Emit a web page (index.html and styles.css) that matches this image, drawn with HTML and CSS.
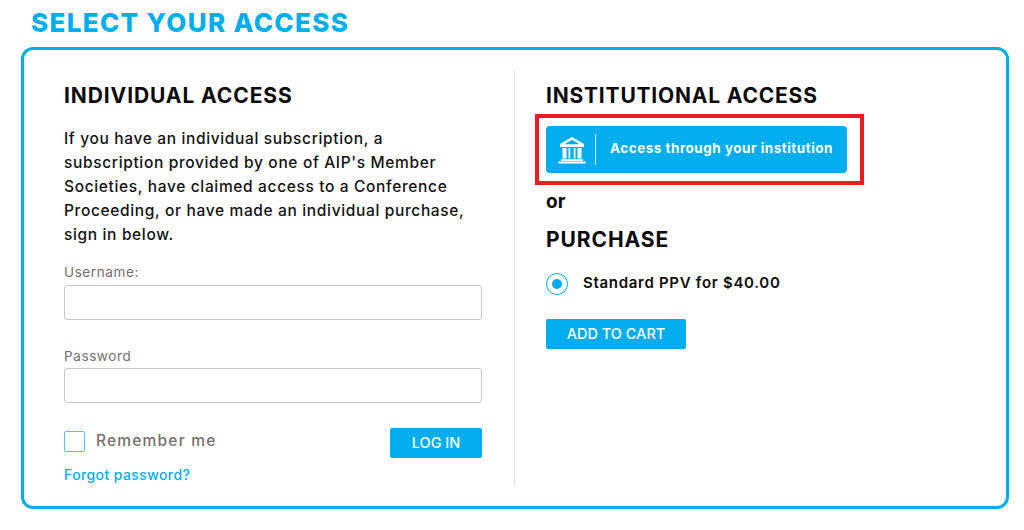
FILE: index.html
```html
<!DOCTYPE html>
<html lang="en">
<head>
<meta charset="utf-8">
<title>Select your access</title>
<link rel="stylesheet" href="styles.css">
</head>
<body>
<h1 class="title">SELECT YOUR ACCESS</h1>
<main class="card">
  <section class="col col-left">
    <h2 class="heading">INDIVIDUAL ACCESS</h2>
    <p class="intro">If you have an individual subscription, a<br>subscription provided by one of AIP's Member<br>Societies, have claimed access to a Conference<br>Proceeding, or have made an individual purchase,<br>sign in below.</p>
    <form class="login">
      <label class="field-label label-user">Username:</label>
      <input class="input" type="text">
      <label class="field-label label-pass">Password</label>
      <input class="input" type="password">
      <div class="login-row">
        <span class="remember"><span class="checkbox"></span>Remember me</span>
        <span class="btn btn-login">LOG IN</span>
      </div>
      <a class="forgot">Forgot password?</a>
    </form>
  </section>
  <section class="col col-right">
    <h2 class="heading">INSTITUTIONAL ACCESS</h2>
    <div class="highlight">
      <a class="inst-btn">
        <svg class="inst-icon" viewBox="0 0 28 28" width="28" height="28" aria-hidden="true">
          <path fill="#fff" d="M14 1 2 8V11H26V8zM14 3.800 21.500 8.300H6.500z" fill-rule="evenodd"/>
          <path fill="#fff" d="M4.500 12h4v10.500h-4zM10.500 12h1.800v10.500h-1.800zM15.700 12h1.800v10.500h-1.800zM19.500 12h4v10.500h-4zM3 23.300h22v1.700H3zM.5 25.500h27V27.500H.5z"/>
        </svg>
        <span class="inst-sep"></span>
        <span class="inst-text">Access through your institution</span>
      </a>
    </div>
    <p class="or">or</p>
    <h2 class="heading heading-purchase">PURCHASE</h2>
    <div class="option"><span class="radio"><span class="radio-dot"></span></span><span class="option-text">Standard PPV for $40.00</span></div>
    <span class="btn btn-cart">ADD TO CART</span>
  </section>
</main>
</body>
</html>
```

FILE: styles.css
```css
* { box-sizing: border-box; }
html, body { margin: 0; padding: 0; background: #fff; }
body {
  width: 1024px;
  height: 530px;
  overflow: hidden;
  font-family: "Inter", "Liberation Sans", sans-serif;
  color: #0c0c0c;
  padding: 7px 15px 0 21px;
}
.title {
  margin: 0 0 9px 10px;
  font-size: 26px;
  line-height: 31px;
  font-weight: 800;
  letter-spacing: 1.34px;
  color: #00aeef;
}
.card {
  height: 462px;
  border: 3px solid #00aeef;
  border-radius: 12px;
  display: grid;
  grid-template-columns: 491px 1fr;
  padding: 20px 0 20px;
}
.col { height: 416px; }
.col-left { padding: 13px 32px 0 40px; border-right: 1px solid #e4e4e4; }
.col-right { padding: 13px 0 0 31px; }
.heading {
  margin: 0;
  font-size: 21px;
  line-height: 26px;
  font-weight: 700;
  letter-spacing: 0.9px;
  color: #0a0a0a;
}
.col-right .heading { letter-spacing: 0.8px; }
.intro {
  margin: 18px 0 0;
  font-size: 15.500px;
  line-height: 24px;
  font-weight: 500;
  letter-spacing: 0.65px;
  color: #111;
  white-space: nowrap;
}
.login { display: flex; flex-direction: column; }
.field-label {
  font-size: 13.500px;
  line-height: 18px;
  letter-spacing: 0.6px;
  color: #77706f;
}
.label-user { margin-top: 16px; margin-bottom: 4px; }
.label-pass { margin-top: 27px; margin-bottom: 3px; }
.input {
  width: 100%;
  height: 35px;
  border: 1px solid #c8c8c8;
  border-radius: 3px;
  background: #fff;
  padding: 0;
}
.login-row {
  display: flex;
  justify-content: space-between;
  align-items: flex-start;
  margin-top: 25px;
}
.remember {
  display: flex;
  align-items: center;
  gap: 11px;
  margin-top: 1px;
  font-size: 15.500px;
  line-height: 20px;
  font-weight: 500;
  letter-spacing: 1.2px;
  color: #77706f;
}
.checkbox {
  display: block;
  width: 21px;
  height: 21px;
  border: 1.500px solid #4cc6f3;
  border-radius: 2px;
  margin-top: 2px;
}
.btn {
  display: flex;
  align-items: center;
  justify-content: center;
  height: 30px;
  padding-bottom: 2px;
  background: #00aeef;
  color: #fff;
  border-radius: 2px;
  font-size: 14.500px;
  font-weight: 500;
}
.btn-login { width: 92px; }
.btn-cart { width: 140px; margin-top: 24px; }
.forgot {
  margin-top: 7px;
  font-size: 14px;
  line-height: 20px;
  font-weight: 500;
  letter-spacing: 0.4px;
  color: #00aeef;
}
.highlight {
  width: 329px;
  height: 71px;
  margin: 5px 0 0 -11px;
  border: 4px solid #ed1c24;
  padding: 8px 7px;
}
.inst-btn {
  display: flex;
  align-items: center;
  width: 301px;
  height: 47px;
  background: #00aeef;
  border-radius: 4px;
  color: #fff;
}
.inst-icon { margin-left: 12px; flex: none; }
.inst-sep {
  width: 1px;
  height: 31px;
  margin-left: 9px;
  background: #fff;
  opacity: .8;
}
.inst-text {
  margin: 0 0 3px 14px;
  font-size: 13.500px;
  font-weight: 700;
  letter-spacing: 0.5px;
  white-space: nowrap;
}
.or {
  margin: 5px 0 0;
  font-size: 19px;
  line-height: 24px;
  font-weight: 700;
}
.heading-purchase { margin-top: 13px; }
.col-right .heading-purchase { letter-spacing: 0.9px; }
.option {
  display: flex;
  align-items: center;
  margin-top: 20px;
}
.radio {
  display: flex;
  align-items: center;
  justify-content: center;
  width: 22px;
  height: 22px;
  border: 1px solid #00aeef;
  border-radius: 50%;
}
.radio-dot {
  width: 10px;
  height: 10px;
  border-radius: 50%;
  background: #00aeef;
}
.option-text {
  margin: 0 0 3px 15px;
  font-size: 15px;
  font-weight: 600;
  letter-spacing: 0.7px;
}
```
